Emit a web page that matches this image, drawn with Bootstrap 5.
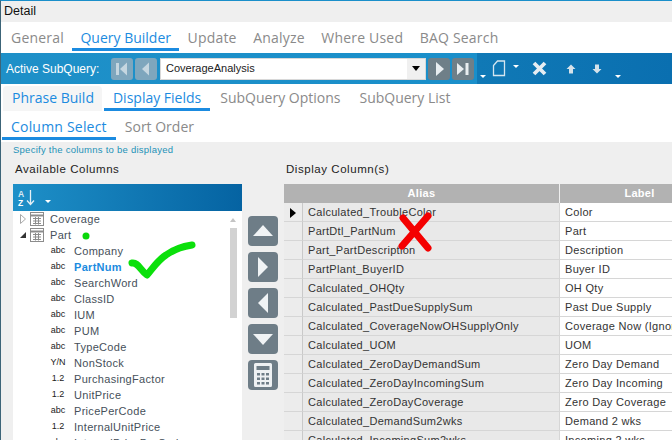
<!DOCTYPE html>
<html lang="en">
<head>
<meta charset="utf-8">
<title>Detail</title>
<link href="https://cdn.jsdelivr.net/npm/bootstrap@5.3.0/dist/css/bootstrap.min.css" rel="stylesheet">
<style>
html,body{margin:0;height:440px;overflow:hidden;background:#efefef}
body{font-family:"Liberation Sans",Arial,sans-serif;color:#333}
.app{width:672px;height:440px;position:relative;overflow:hidden;border-top:1px solid #1a8fca;border-left:1px solid #3c6478}
.title-strip{height:21px;line-height:21px;padding-left:3px;font-size:12.5px;color:#111;background:#efefef}
.tab-row{background:#fff;display:flex;align-items:flex-start;font-family:"Open Sans",sans-serif;color:#8a8a8a;font-size:14px}
.tabs-a{height:31px;padding-left:1.75px}
.tabs-b{height:30px;padding-left:2px}
.tabs-c{height:28px;padding-left:1px}
.tb{padding:0 9px;display:flex;align-items:center;white-space:nowrap;border-bottom:3px solid transparent}
.tb.on{color:#1b8be0;border-bottom-color:#1b8be0}
.tabs-a .tb{height:29px;padding:4px 8.25px 0;letter-spacing:.2px}
.tabs-a .tb.on{letter-spacing:0}
.tabs-b .tb{height:27px;padding-top:3px;margin-right:1px}
.tabs-c .tb{height:26px;padding-top:2px}
.tabs-c .tb.on{letter-spacing:.2px}
.tabs-b .tb.soft{background:#f5f5f5;color:#1b8be0;border-radius:4px 4px 0 0;border-bottom-color:#f5f5f5;margin-top:2px;height:25px;padding-top:1px;margin-right:2px;padding-right:8px}
.tool{height:31px;display:flex;align-items:center;background:linear-gradient(90deg,#1e90c8,#1a8fca 71%,#1079b6 71%,#0a6fb0);color:#fff;font-size:12px}
.tool-l{width:110px;padding-left:5px;flex:none}
.nbtn{width:22px;height:22px;border-radius:3px;background:#6f7f88;display:flex;align-items:center;justify-content:center;margin-right:2px;flex:none}
.nbtn.off{background:#7ea6bd}
.sq-sel{width:266px;height:22px;margin:0 2px 0 1px;background:#fff;border:1px solid #d8d8d8;display:flex;align-items:center;color:#222;font-size:11px;padding-left:5px;justify-content:space-between;flex:none}
.sq-arrow{width:18px;height:20px;background:#f0f0f0;display:flex;align-items:center;justify-content:center}
.caret-w{width:0;height:0;border-left:3px solid transparent;border-right:3px solid transparent;border-top:3px solid #fff;flex:none}
.gap-doc{margin-left:6px}
.gap-cr{margin-left:7px}
.gap-x{margin-left:13px}
.gap-up{margin-left:19px}
.gap-dn{margin-left:16px}
.gap-end{margin-left:13px}
.hint{height:17px;line-height:16px;padding-left:12px;font-size:9.5px;color:#1d92b8;letter-spacing:.25px}
.work{display:flex;align-items:flex-start}
.left-p{width:229px;margin-left:12px;flex:none}
.lbl{height:25px;font-size:11.5px;line-height:20px;padding-left:2px;color:#222;letter-spacing:.55px}
.tree-h{height:27px;background:linear-gradient(90deg,#1e90c8,#0563a2);position:relative;display:flex;align-items:center;padding-left:4px}
.tree{background:#fff;height:240px;position:relative;overflow:hidden;font-size:11px;letter-spacing:.3px}
.tr{height:16px;display:flex;align-items:center;color:#46505a;white-space:nowrap}
.tr .ty{width:32px;text-align:center;font-size:9px;color:#222;margin-left:29px;flex:none;letter-spacing:0}
.tr.par{padding-left:5px}
.tr.par .ar{width:10px;flex:none;display:flex;justify-content:center}
.tr.par svg.gr{margin:0 6px 0 2px}
.sel-n{color:#1b8be0;font-weight:700}
.sb-track{position:absolute;left:217px;top:17px;width:7px;height:90px;background:#d2d2d2}
.sb-up{position:absolute;left:217px;top:7px;width:0;height:0;border-left:3.5px solid transparent;border-right:3.5px solid transparent;border-bottom:4px solid #c4c4c4}
.mid-p{width:30px;margin:57px 0 0 6px;flex:none;display:flex;flex-direction:column;gap:6px}
.mv{width:30px;height:30px;border-radius:4px;background:#6e7d87;display:flex;align-items:center;justify-content:center}
.right-p{margin-left:6px;flex:1;min-width:0}
.grid-w{width:388px;overflow:hidden;font-size:11px;letter-spacing:.3px}
.grid-w table{border-collapse:separate;border-spacing:0;table-layout:fixed;width:436px;margin:0;color:#333}
.col-i{width:19px}
.col-a{width:257px}
.col-l{width:160px}
.grid-w th{height:19px;background:#b2b2b2;color:#fff;font-weight:700;text-align:center;padding:0;font-size:11px;border-right:1px solid #efefef}
.grid-w td{height:19px;padding:0 0 0 5px;white-space:nowrap;overflow:hidden;border-bottom:1px solid #d6d6d6}
.grid-w td.ind{background:#ececec;border-right:1px solid #c9c9c9;padding:0 0 0 6px}
.grid-w td.al{background:#e9e9e9;border-right:1px solid #d6d6d6}
.grid-w td.lb{background:#fff}
.mark-x{position:absolute;left:394px;top:207px}
.mark-c{position:absolute;left:126px;top:239px}
.mark-d{position:absolute;left:81px;top:231px}
</style>
</head>
<body>
<div class="app">
  <div class="title-strip">Detail</div>
  <div class="tab-row tabs-a">
    <div class="tb">General</div><div class="tb on">Query Builder</div><div class="tb">Update</div><div class="tb">Analyze</div><div class="tb">Where Used</div><div class="tb">BAQ Search</div>
  </div>
  <div class="tool">
    <div class="tool-l">Active SubQuery:</div>
    <div class="nbtn off"><svg width="16" height="16" viewBox="0 0 16 16"><rect x="2" y="2" width="3" height="12" fill="#c5d6e0"/><path d="M13 1.500V14.500L6 8z" fill="#c5d6e0"/></svg></div>
    <div class="nbtn off"><svg width="16" height="16" viewBox="0 0 16 16"><path d="M11 1.500V14.500L4 8z" fill="#c5d6e0"/></svg></div>
    <div class="sq-sel"><span>CoverageAnalysis</span><span class="sq-arrow"><svg width="8" height="5" viewBox="0 0 8 5"><path d="M0 0H8L4 5z" fill="#000"/></svg></span></div>
    <div class="nbtn"><svg width="16" height="16" viewBox="0 0 16 16"><path d="M5 1V15L13 8z" fill="#e8edf0"/></svg></div>
    <div class="nbtn"><svg width="16" height="16" viewBox="0 0 16 16"><path d="M2 2V14L9 8z" fill="#e8edf0"/><rect x="10.500" y="2" width="3" height="12" fill="#e8edf0"/></svg></div>
    <span class="caret-w ms-1 mt-3"></span>
    <svg class="gap-doc" width="14" height="17" viewBox="0 0 14 17"><path d="M5.500 1H12.500V15.500H1.500V5.500z" fill="none" stroke="#d5e6f0" stroke-width="1.300"/></svg>
    <span class="caret-w gap-cr mb-1"></span>
    <svg class="gap-x" width="15" height="15" viewBox="0 0 15 15"><path d="M2 2L13 13M13 2L2 13" stroke="#e6edf2" stroke-width="3.800"/></svg>
    <svg class="gap-up" width="10" height="10" viewBox="0 0 10 10"><path d="M5 0.500L9.500 5H7V9.500H3V5H0.500z" fill="#d5e2ea"/></svg>
    <svg class="gap-dn" width="10" height="10" viewBox="0 0 10 10"><path d="M5 9.500L9.500 5H7V0.500H3V5H0.500z" fill="#d5e2ea"/></svg>
    <span class="caret-w mt-3 gap-end"></span>
  </div>
  <div class="tab-row tabs-b">
    <div class="tb soft">Phrase Build</div><div class="tb on">Display Fields</div><div class="tb">SubQuery Options</div><div class="tb">SubQuery List</div>
  </div>
  <div class="tab-row tabs-c">
    <div class="tb on">Column Select</div><div class="tb">Sort Order</div>
  </div>
  <div class="hint">Specify the columns to be displayed</div>
  <div class="work">
    <div class="left-p">
      <div class="lbl">Available Columns</div>
      <div class="tree-h">
        <svg width="24" height="20" viewBox="0 0 24 20"><text x="1" y="9" font-size="8.500" font-weight="700" fill="#dbe9f2" font-family="Liberation Sans">A</text><text x="1" y="18" font-size="8.500" font-weight="700" fill="#fff" font-family="Liberation Sans">Z</text><path d="M13.500 2V16M10 12.500L13.500 16.500L17 12.500" fill="none" stroke="#e6f0f6" stroke-width="1.300"/></svg>
        <span class="caret-w ms-1 mt-2"></span>
      </div>
      <div class="tree">
        <div class="tr par"><span class="ar"><svg width="6" height="10" viewBox="0 0 6 10"><path d="M.5 .5L5.500 5L.5 9.500z" fill="#fff" stroke="#a8a8a8"/></svg></span><svg class="gr" width="14" height="14" viewBox="0 0 14 14"><rect x=".5" y=".5" width="13" height="13" fill="#fff" stroke="#8c8c8c"/><path d="M.5 3.500H13.500" stroke="#8c8c8c" stroke-width="2"/><path d="M3 6.500H11M3 9H11M3 11.500H11M5.500 5V12.500M8.500 5V12.500" stroke="#8c8c8c" fill="none"/></svg><span>Coverage</span></div>
        <div class="tr par"><span class="ar"><svg width="6" height="6" viewBox="0 0 6 6"><path d="M6 0V6H0z" fill="#333"/></svg></span><svg class="gr" width="14" height="14" viewBox="0 0 14 14"><rect x=".5" y=".5" width="13" height="13" fill="#fff" stroke="#8c8c8c"/><path d="M.5 3.500H13.500" stroke="#8c8c8c" stroke-width="2"/><path d="M3 6.500H11M3 9H11M3 11.500H11M5.500 5V12.500M8.500 5V12.500" stroke="#8c8c8c" fill="none"/></svg><span>Part</span></div>
        <div class="tr"><span class="ty">abc</span><span>Company</span></div>
        <div class="tr"><span class="ty">abc</span><span class="sel-n">PartNum</span></div>
        <div class="tr"><span class="ty">abc</span><span>SearchWord</span></div>
        <div class="tr"><span class="ty">abc</span><span>ClassID</span></div>
        <div class="tr"><span class="ty">abc</span><span>IUM</span></div>
        <div class="tr"><span class="ty">abc</span><span>PUM</span></div>
        <div class="tr"><span class="ty">abc</span><span>TypeCode</span></div>
        <div class="tr"><span class="ty">Y/N</span><span>NonStock</span></div>
        <div class="tr"><span class="ty">1.2</span><span>PurchasingFactor</span></div>
        <div class="tr"><span class="ty">1.2</span><span>UnitPrice</span></div>
        <div class="tr"><span class="ty">abc</span><span>PricePerCode</span></div>
        <div class="tr"><span class="ty">1.2</span><span>InternalUnitPrice</span></div>
        <div class="tr"><span class="ty">abc</span><span>InternalPricePerCode</span></div>
        <div class="sb-up"></div><div class="sb-track"></div>
      </div>
    </div>
    <div class="mid-p">
      <div class="mv"><svg width="20" height="12" viewBox="0 0 20 12"><path d="M10 0L20 11H0z" fill="#f0f3f5"/></svg></div>
      <div class="mv"><svg width="12" height="20" viewBox="0 0 12 20"><path d="M1 0L11 10L1 20z" fill="#f0f3f5"/></svg></div>
      <div class="mv"><svg width="12" height="20" viewBox="0 0 12 20"><path d="M11 0L1 10L11 20z" fill="#f0f3f5"/></svg></div>
      <div class="mv"><svg width="20" height="12" viewBox="0 0 20 12"><path d="M10 12L20 1H0z" fill="#f0f3f5"/></svg></div>
      <div class="mv"><svg width="18" height="24" viewBox="0 0 18 24"><path fill-rule="evenodd" d="M1.500 0H16.500A1.500 1.500 0 0 1 18 1.500V22.500A1.500 1.500 0 0 1 16.500 24H1.500A1.500 1.500 0 0 1 0 22.500V1.500A1.500 1.500 0 0 1 1.500 0zM2.500 3V7H15.500V3z" fill="#eef1f3"/><path d="M3 10h3v2.500H3zM7.500 10h3v2.500h-3zM12 10h3v2.500h-3zM3 14.500h3v2.500H3zM7.500 14.500h3v2.500h-3zM12 14.500h3v2.500h-3zM3 19h3v2.500H3zM7.500 19h3v2.500h-3zM12 19h3v2.500h-3z" fill="#6e7d87"/></svg></div>
    </div>
    <div class="right-p">
      <div class="lbl">Display Column(s)</div>
      <div class="grid-w">
        <table>
          <colgroup><col class="col-i"><col class="col-a"><col class="col-l"></colgroup>
          <thead><tr><th colspan="2">Alias</th><th>Label</th></tr></thead>
          <tbody>
            <tr><td class="ind"><svg width="6" height="10" viewBox="0 0 6 10"><path d="M0 0L6 5L0 10z" fill="#000"/></svg></td><td class="al">Calculated_TroubleColor</td><td class="lb">Color</td></tr>
            <tr><td class="ind"></td><td class="al">PartDtl_PartNum</td><td class="lb">Part</td></tr>
            <tr><td class="ind"></td><td class="al">Part_PartDescription</td><td class="lb">Description</td></tr>
            <tr><td class="ind"></td><td class="al">PartPlant_BuyerID</td><td class="lb">Buyer ID</td></tr>
            <tr><td class="ind"></td><td class="al">Calculated_OHQty</td><td class="lb">OH Qty</td></tr>
            <tr><td class="ind"></td><td class="al">Calculated_PastDueSupplySum</td><td class="lb">Past Due Supply</td></tr>
            <tr><td class="ind"></td><td class="al">Calculated_CoverageNowOHSupplyOnly</td><td class="lb">Coverage Now (Ignore</td></tr>
            <tr><td class="ind"></td><td class="al">Calculated_UOM</td><td class="lb">UOM</td></tr>
            <tr><td class="ind"></td><td class="al">Calculated_ZeroDayDemandSum</td><td class="lb">Zero Day Demand</td></tr>
            <tr><td class="ind"></td><td class="al">Calculated_ZeroDayIncomingSum</td><td class="lb">Zero Day Incoming</td></tr>
            <tr><td class="ind"></td><td class="al">Calculated_ZeroDayCoverage</td><td class="lb">Zero Day Coverage</td></tr>
            <tr><td class="ind"></td><td class="al">Calculated_DemandSum2wks</td><td class="lb">Demand 2 wks</td></tr>
            <tr><td class="ind"></td><td class="al">Calculated_IncomingSum2wks</td><td class="lb">Incoming 2 wks</td></tr>
          </tbody>
        </table>
      </div>
    </div>
  </div>
  <svg class="mark-d" width="8" height="8" viewBox="0 0 8 8"><circle cx="4" cy="4" r="3.500" fill="#0bd80b"/></svg>
  <svg class="mark-c" width="70" height="44" viewBox="0 0 70 44"><path d="M5 23C11 22 13 30 20 35C26 28 31 20 39 15C46 10 52 7 65 5" fill="none" stroke="#0be00b" stroke-width="7" stroke-linecap="round" stroke-linejoin="round"/></svg>
  <svg class="mark-x" width="40" height="46" viewBox="0 0 40 46"><path d="M8 10L33 40M33 8L7 38" fill="none" stroke="#f40000" stroke-width="7" stroke-linecap="round"/></svg>
</div>
</body>
</html>
